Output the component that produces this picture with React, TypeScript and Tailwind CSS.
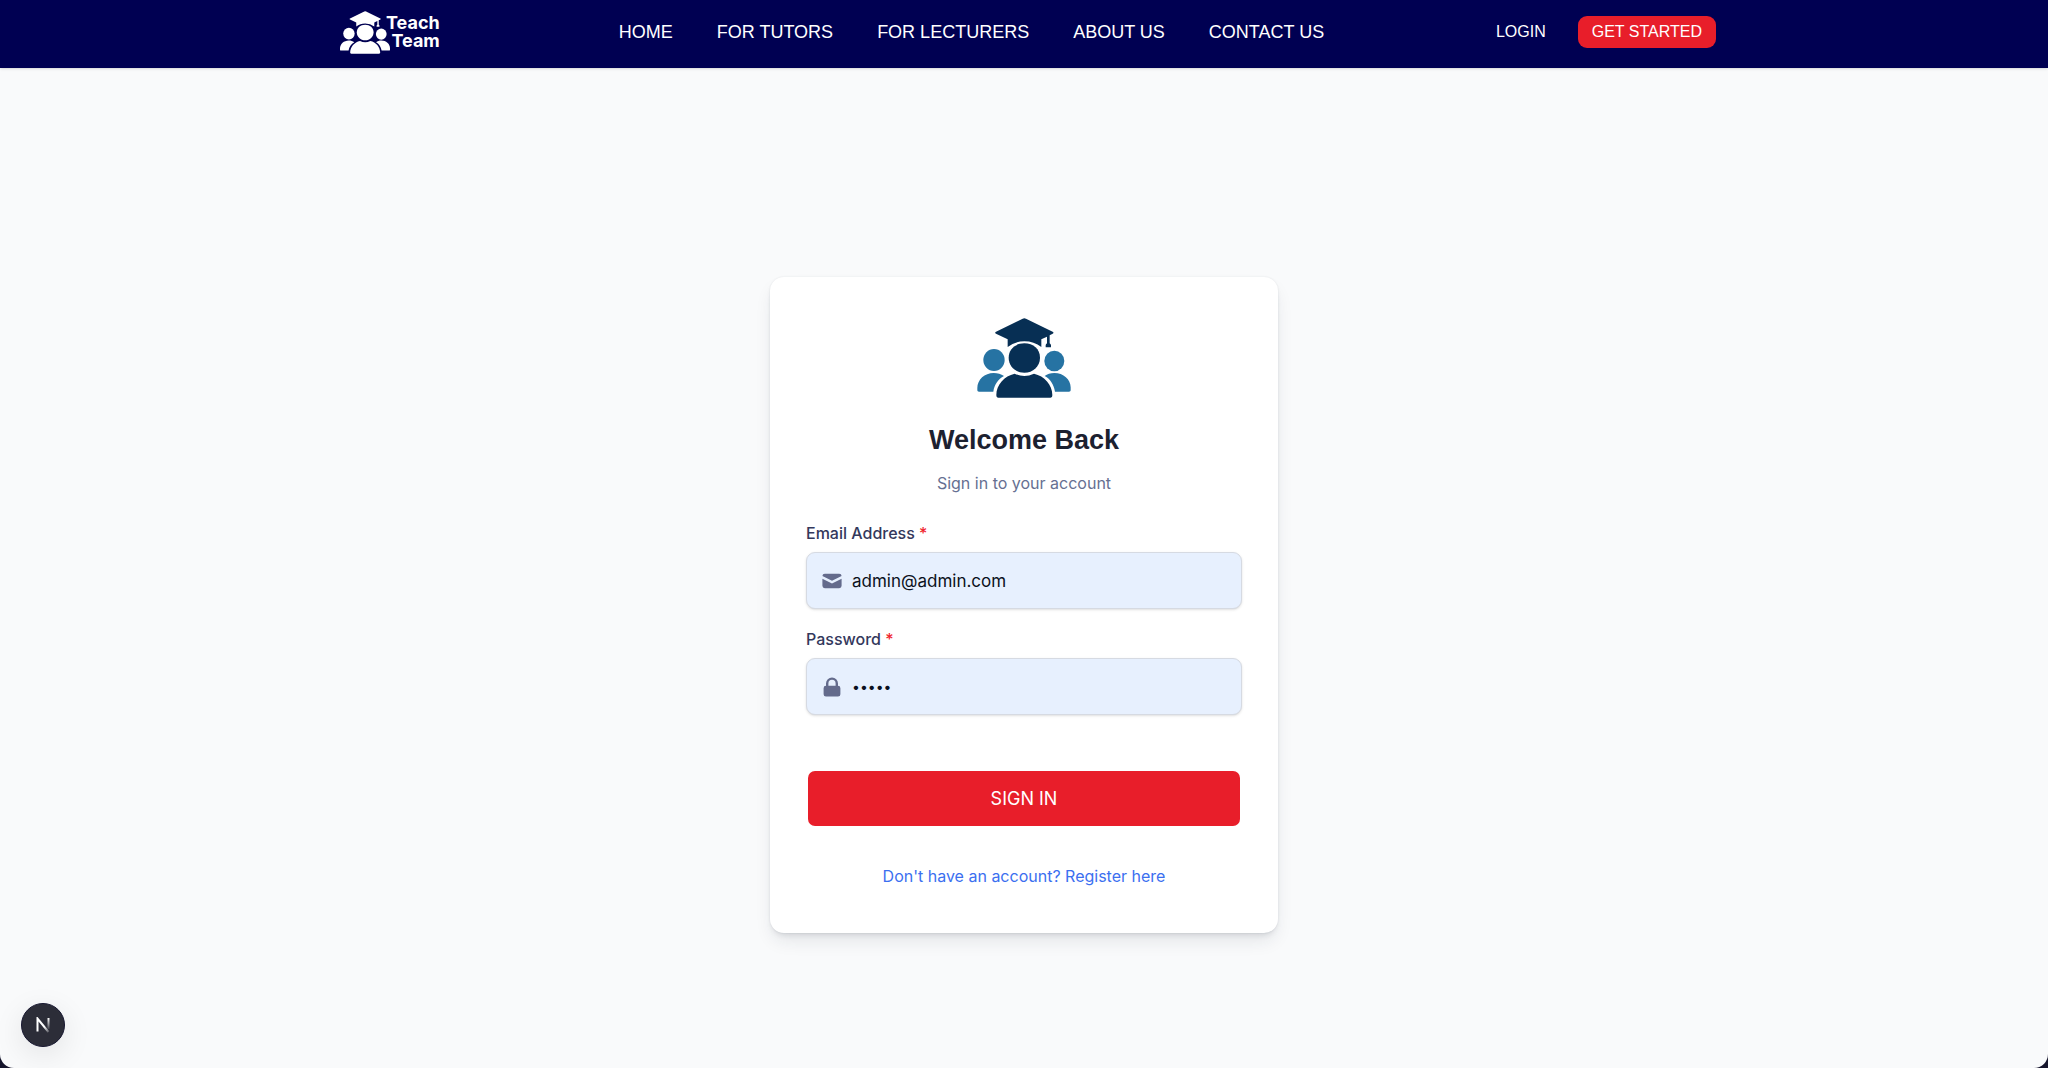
import { useState } from 'react';
import { HiLockClosed, HiMail } from 'react-icons/hi';

const navLinks = [
  { label: 'HOME', href: '#home' },
  { label: 'FOR TUTORS', href: '#tutors' },
  { label: 'FOR LECTURERS', href: '#lecturers' },
  { label: 'ABOUT US', href: '#about' },
  { label: 'CONTACT US', href: '#contact' },
];

function TeamIcon({ className, main, side }: { className: string; main: string; side: string }) {
  return (
    <svg viewBox="0 0 280 240" className={className} aria-hidden="true">
      {/* side people */}
      <g className={side}>
        <ellipse cx="50" cy="126" rx="32" ry="33" />
        <ellipse cx="231" cy="129" rx="30" ry="31" />
        <path d="M49 165c12 0 22 3 31 9-18 10-29 26-32 47H5c-3 0-5-2-5-5v-6c0-25 22-45 49-45Z" />
        <path d="M231 165c-12 0-21 3-29 9 18 10 27 26 31 47h42c3 0 5-2 5-5v-8c0-24-22-43-49-43Z" />
      </g>
      {/* graduate in the middle */}
      <g className={main}>
        <path d="M136 2q5-3 10 0l80 39q5 3 0 6l-9 5v24q4 3 4 6v6h-16v-6q0-3 4-6V56l-17 8v23q-22-17-51-17T91 87V64L56 47q-5-3 0-6Z" />
        <path d="M141 76c27 0 47 17 47 43s-21 45-47 45-47-19-47-45 20-43 47-43Z" />
        <path d="M112 167q29 14 58 0c31 7 55 33 55 64 0 6-2 8-6 8H63c-4 0-6-2-6-8 0-31 24-57 55-64Z" />
      </g>
    </svg>
  );
}

function Navbar() {
  return (
    <header className="bg-[#000052] text-white shadow-sm">
      <div className="mx-auto flex h-17 w-full max-w-[1384px] items-center justify-between pb-1">
        <a href="#home" className="flex w-[115px] items-center pl-2">
          <TeamIcon className="h-[43px] w-[50px] shrink-0" main="fill-white" side="fill-white" />
          <span className="-ml-1 flex flex-col text-right font-['Inter'] text-lg leading-[18px] font-bold">
            <span>Teach</span>
            <span>Team</span>
          </span>
        </a>
        <nav className="flex items-center gap-11 text-lg">
          {navLinks.map((link) => (
            <a key={link.label} href={link.href} className="whitespace-nowrap hover:text-gray-300">
              {link.label}
            </a>
          ))}
        </nav>
        <div className="flex items-center gap-8 text-base">
          <a href="#login">LOGIN</a>
          <button type="button" className="h-8 rounded-[9px] bg-[#e81e2a] px-[14px] whitespace-nowrap">
            GET STARTED
          </button>
        </div>
      </div>
    </header>
  );
}

function LoginForm() {
  const [email, setEmail] = useState('admin@admin.com');
  const [password, setPassword] = useState('admin');

  return (
    <form
      onSubmit={(e) => e.preventDefault()}
      className="flex w-full max-w-[508px] flex-col rounded-[14px] bg-white px-9 pt-[41px] pb-[45px] font-['Inter'] shadow-[0_0_2px_#1f29371a,0_10px_18px_-3px_#1f29371a,0_4px_6px_-3px_#1f293726]"
    >
      <TeamIcon className="mx-auto h-20 w-[94px]" main="fill-[#072f54]" side="fill-[#2673a3]" />
      <h1 className="mt-[22px] text-center font-['Liberation_Sans'] text-[27px] leading-10 font-bold text-[#1c2130]">
        Welcome Back
      </h1>
      <p className="mt-[11px] text-center text-base leading-6 text-[#667092]">Sign in to your account</p>

      <div className="mt-7">
        <label htmlFor="email" className="block text-base leading-5 font-medium text-[#33385c]">
          Email Address <span className="text-[#f0242d]">*</span>
        </label>
        <div className="mt-[9px] flex h-[57px] items-center rounded-[9px] border border-[#d6dae2] bg-[#e7f0fe] shadow-sm">
          <HiMail className="ml-[13px] size-6 shrink-0 text-[#646b8c]" />
          <input
            id="email"
            type="email"
            value={email}
            onChange={(e) => setEmail(e.target.value)}
            className="h-full w-full bg-transparent px-2 text-[17px] text-[#0b1020] outline-none"
          />
        </div>
      </div>

      <div className="mt-5">
        <label htmlFor="password" className="block text-base leading-5 font-medium text-[#33385c]">
          Password <span className="text-[#f0242d]">*</span>
        </label>
        <div className="mt-[9px] flex h-[57px] items-center rounded-[9px] border border-[#d6dae2] bg-[#e7f0fe] shadow-sm">
          <HiLockClosed className="ml-[13px] size-6 shrink-0 text-[#646b8c]" />
          <input
            id="password"
            type="password"
            value={password}
            onChange={(e) => setPassword(e.target.value)}
            className="h-full w-full bg-transparent px-2 text-sm text-[#0b1020] outline-none"
          />
        </div>
      </div>

      <button type="submit" className="mx-[2px] mt-14 h-[55px] rounded-[7px] bg-[#e81e2a] text-lg text-white">
        SIGN IN
      </button>

      <a href="#register" className="mt-[38px] text-center text-base leading-6 text-[#3b6ff0] hover:underline">
        Don't have an account? Register here
      </a>
    </form>
  );
}

function DevBadge() {
  return (
    <button
      type="button"
      aria-label="Open dev tools"
      className="fixed bottom-[21px] left-[21px] flex size-11 items-center justify-center rounded-full border border-[#171730] bg-[#2c2d38] shadow-[0_8px_30px_#00000018]"
    >
      <svg viewBox="0 0 16 16" className="size-4" fill="none">
        <defs>
          <linearGradient id="diagonal" x1="4" y1="4" x2="14" y2="16" gradientUnits="userSpaceOnUse">
            <stop offset="0.5" stopColor="#fff" />
            <stop offset="1" stopColor="#fff" stopOpacity="0.1" />
          </linearGradient>
          <linearGradient id="stem" x1="13" y1="1" x2="13" y2="12" gradientUnits="userSpaceOnUse">
            <stop stopColor="#fff" />
            <stop offset="1" stopColor="#fff" stopOpacity="0.1" />
          </linearGradient>
        </defs>
        <path d="M2.5 14.5v-13l11 13.5" stroke="url(#diagonal)" strokeWidth="2" />
        <path d="M13.5 1v11" stroke="url(#stem)" strokeWidth="2" />
      </svg>
    </button>
  );
}

export default function App() {
  return (
    <div className="bg-[#15152c] font-['Liberation_Sans',sans-serif]">
      <div className="flex min-h-screen flex-col overflow-hidden rounded-b-[14px] bg-[#f9fafb]">
        <Navbar />
        <main className="flex flex-1 items-center justify-center pt-[74px]">
          <LoginForm />
        </main>
      </div>
      <DevBadge />
    </div>
  );
}
